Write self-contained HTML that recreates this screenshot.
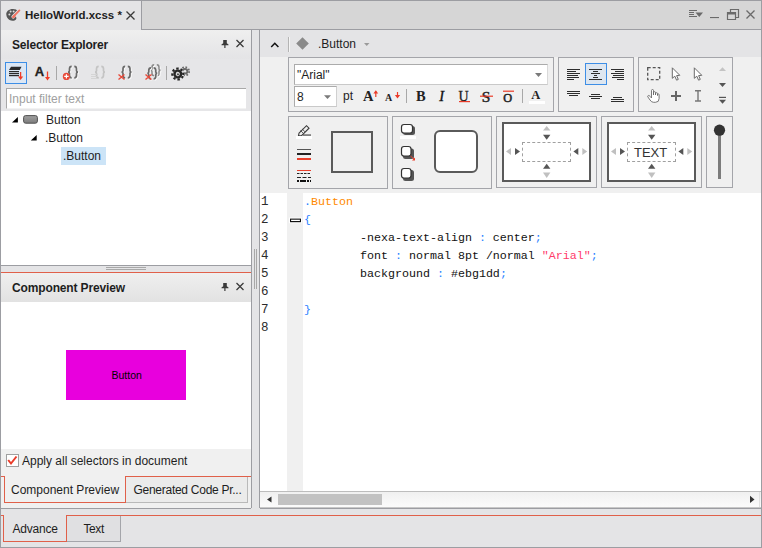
<!DOCTYPE html>
<html><head><meta charset="utf-8">
<style>
*{margin:0;padding:0;box-sizing:border-box}
html,body{width:762px;height:548px;overflow:hidden;background:#e4e4e6;font-family:"Liberation Sans",sans-serif;font-size:12px;color:#1e1e1e}
.a{position:absolute}
.t{position:absolute;white-space:nowrap;line-height:14px}
.b{font-weight:bold}
.m{font-family:"Liberation Mono",monospace}
svg{position:absolute;overflow:visible}
</style></head><body>
<!-- outer frame -->
<div class="a" style="left:0;top:0;width:762px;height:548px;border:1px solid #9c9da2;"></div>
<!-- tab bar -->
<div class="a" style="left:1px;top:1px;width:760px;height:28px;background:#d6d6d6"></div>
<div class="a" style="left:141px;top:29px;width:620px;height:1px;background:#9c9da2"></div>
<div class="a" style="left:1px;top:1px;width:140px;height:29px;background:#e4e4e6"></div>
<div class="a" style="left:141px;top:1px;width:1px;height:29px;background:#9c9da2"></div>
<div class="t b" id="doctab" style="left:25px;top:8px;font-size:11.5px">HelloWorld.xcss *</div>

<!-- left panel frame -->
<div class="a" style="left:1px;top:30px;width:250px;height:236px;background:#fff"></div>
<div class="a" style="left:251px;top:30px;width:1px;height:478px;background:#9c9da2"></div>
<!-- selector explorer header -->
<div class="a" style="left:1px;top:30px;width:250px;height:29px;background:linear-gradient(#efefef,#e4e4e6)"></div>
<div class="t b" id="selhdr" style="left:12px;top:38px;font-size:12px;letter-spacing:-0.2px">Selector Explorer</div>
<!-- toolbar -->
<div class="a" style="left:1px;top:59px;width:250px;height:52px;background:#e6e6e8"></div>
<div class="a" style="left:5px;top:62px;width:22px;height:22px;border:1px solid #3d8ee6;background:#dce7f4"></div>
<div class="a" style="left:6px;top:88px;width:240px;height:21px;border-top:1px solid #a8a8a8;border-left:1px solid #a8a8a8;border-bottom:1px solid #f2f2f2;background:#fff"></div>
<div class="t" id="filter" style="left:9px;top:92px;color:#a0a0a0">Input filter text</div>
<!-- tree -->
<div class="a" style="left:1px;top:265px;width:250px;height:1px;background:#9c9da2"></div>
<div class="a" style="left:61px;top:147px;width:45px;height:18px;background:#cce4f7"></div>
<div class="t" id="tr1" style="left:46px;top:113px">Button</div>
<div class="t" id="tr2" style="left:45px;top:131px">.Button</div>
<div class="t" id="tr3" style="left:63px;top:149px">.Button</div>

<!-- component preview -->
<div class="a" style="left:1px;top:272px;width:250px;height:1px;background:#e0604a"></div>
<div class="a" style="left:1px;top:273px;width:250px;height:29px;background:linear-gradient(#efefef,#e2e2e2)"></div>
<div class="t b" id="cphdr" style="left:12px;top:281px;font-size:12px;letter-spacing:-0.14px">Component Preview</div>
<div class="a" style="left:1px;top:302px;width:250px;height:147px;background:#fff"></div>
<div class="a" style="left:66px;top:350px;width:120px;height:50px;background:#e800dd"></div>
<div class="t" id="pbtn" style="left:111.5px;top:368px;font-size:10.5px;color:#000">Button</div>
<div class="a" style="left:1px;top:449px;width:250px;height:59px;background:#f0f0f0"></div>
<div class="a" style="left:6px;top:454px;width:13px;height:13px;border:1px solid #a0a0a0;background:#fff"></div>
<div class="t" id="apply" style="left:22px;top:454px">Apply all selectors in document</div>
<div class="a" style="left:1px;top:508px;width:250px;height:1px;background:#9c9da2"></div>

<!-- right editor -->
<div class="a" style="left:259px;top:30px;width:1px;height:478px;background:#9c9da2"></div>
<div class="a" style="left:260px;top:30px;width:501px;height:27px;background:#e4e4e6"></div>
<div class="t" id="edhdr" style="left:318px;top:37px">.Button</div>
<div class="a" style="left:260px;top:57px;width:501px;height:136px;background:#f0f0f0"></div>
<div class="a" style="left:260px;top:193px;width:501px;height:298px;background:#fff"></div>
<div class="a" style="left:287px;top:193px;width:16px;height:298px;background:#f0f0f0"></div>
<div class="a" style="left:260px;top:491px;width:501px;height:18px;border-top:1px solid #bdbdbd;border-bottom:1px solid #9c9da2;background:linear-gradient(#f0f0f0,#fcfcfc)"></div><div class="a" style="left:260px;top:507px;width:501px;height:1px;background:#c8c8c8"></div><div class="a" style="left:759px;top:492px;width:1px;height:15px;background:#e0e0e0"></div>
<div class="a" style="left:278px;top:494px;width:104px;height:11px;background:#c2c2c2"></div>


<!-- right toolbar groups -->
<div class="a" style="left:288px;top:57px;width:266px;height:55px;border:1px solid #a4a5aa;background:#f0f0f0"></div>
<div class="a" style="left:558px;top:57px;width:76px;height:55px;border:1px solid #a4a5aa;background:#f0f0f0"></div>
<div class="a" style="left:638px;top:57px;width:95px;height:55px;border:1px solid #a4a5aa;background:#f0f0f0"></div>
<div class="a" style="left:294px;top:64px;width:254px;height:21px;border:1px solid #ababab;border-right-color:#d9d9d9;border-bottom-color:#c9c9c9;background:#fff"></div>
<div class="t" id="arial" style="left:297px;top:68px">"Arial"</div>
<div class="a" style="left:294px;top:86px;width:43px;height:21px;border:1px solid #ababab;border-right-color:#d0d0d0;border-bottom-color:#c9c9c9;background:#fff"></div>
<div class="t" id="sz8" style="left:297px;top:90px">8</div>
<div class="t" id="pt" style="left:343px;top:89px">pt</div>
<div class="a" style="left:585px;top:63px;width:22px;height:22px;border:1px solid #3d8ee6;background:#dde6f0"></div>
<div class="a" style="left:288px;top:116px;width:100px;height:73px;border:1px solid #a4a5aa;background:#f0f0f0"></div>
<div class="a" style="left:392px;top:116px;width:100px;height:73px;border:1px solid #a4a5aa;background:#f0f0f0"></div>
<div class="a" style="left:496px;top:116px;width:101px;height:72px;border:1px solid #a4a5aa;background:#f0f0f0"></div>
<div class="a" style="left:601px;top:116px;width:101px;height:72px;border:1px solid #a4a5aa;background:#f0f0f0"></div>
<div class="a" style="left:706px;top:116px;width:27px;height:72px;border:1px solid #a4a5aa;background:#f0f0f0"></div>
<div class="a" style="left:502px;top:122px;width:89px;height:60px;border:2px solid #5a5a5a;background:#fff"></div>
<div class="a" style="left:607px;top:122px;width:89px;height:60px;border:2px solid #5a5a5a;background:#fff"></div>
<div class="a" style="left:522px;top:142px;width:49px;height:20px;border:1px dashed #a0a0a0"></div>
<div class="a" style="left:627px;top:142px;width:49px;height:20px;border:1px dashed #a0a0a0"></div>
<div class="t" id="textlbl" style="left:634px;top:146px;font-size:13px;color:#333">TEXT</div>
<div class="a" style="left:331px;top:131px;width:42px;height:42px;border:2.5px solid #5a5a5a;background:#f0f0f0"></div>
<div class="a" style="left:434px;top:130px;width:44px;height:43px;border:2.5px solid #5a5a5a;border-radius:6px;background:#fff"></div>


<!-- code editor -->
<style>
.ln{position:absolute;left:261px;font-family:"Liberation Mono",monospace;font-size:12.5px;line-height:18px;color:#2b2b2b;white-space:pre}
.cd{position:absolute;left:304px;font-family:"Liberation Mono",monospace;font-size:11.6667px;line-height:18px;color:#111;white-space:pre}
.bl{color:#2a7fff}.or{color:#ff8a00}.pk{color:#ff3a6a}
</style>
<div class="ln" id="lnums" style="top:193px">1<br>2<br>3<br>4<br>5<br>6<br>7<br>8</div>
<div class="cd" id="code" style="top:193px"><span class="bl">.</span><span class="or">Button</span>
<span class="bl">{</span>
        -nexa-text-align <span class="bl">:</span> center<span class="bl">;</span>
        font <span class="bl">:</span> normal 8pt /normal <span class="pk">"Arial"</span><span class="bl">;</span>
        background <span class="bl">:</span> #ebg1dd<span class="bl">;</span>

<span class="bl">}</span>
</div>
<!-- bottom-left tabs -->
<div class="a" style="left:1px;top:476px;width:4px;height:1px;background:#e0604a"></div>
<div class="a" style="left:125px;top:476px;width:126px;height:1px;background:#e0604a"></div>
<div class="a" style="left:4px;top:476px;width:122px;height:27px;border:1px solid #e0604a;border-top:none;background:#f0f0f0"></div>
<div class="a" style="left:126px;top:477px;width:122px;height:26px;border-right:1px solid #b9b9b9;border-bottom:1px solid #b9b9b9;background:#ebebeb"></div>
<div class="t" id="cptab" style="left:11px;top:483px">Component Preview</div>
<div class="t" id="gentab" style="left:133.5px;top:483px;letter-spacing:-0.27px">Generated Code Pr...</div>
<!-- bottom tabs -->
<div class="a" style="left:3px;top:515px;width:64px;height:27px;border:1px solid #e0604a;border-top:none;background:#e4e4e6"></div>
<div class="a" style="left:67px;top:516px;width:54px;height:26px;border-right:1px solid #a4a5aa;border-bottom:1px solid #a4a5aa;background:#e0e0e2"></div>

<div class="a" style="left:1px;top:515px;width:3px;height:1px;background:#e0604a"></div><div class="a" style="left:66px;top:515px;width:695px;height:1px;background:#e0604a"></div>
<div class="t" id="adv" style="left:12.5px;top:522px;letter-spacing:-0.2px">Advance</div>
<div class="t" id="txt" style="left:83.5px;top:522px;letter-spacing:-0.4px">Text</div>


<svg class="a" style="left:0;top:0" width="762" height="548" viewBox="0 0 762 548">
<defs>
<linearGradient id="btng" x1="0" y1="0" x2="0" y2="1"><stop offset="0" stop-color="#a0a0a0"/><stop offset="1" stop-color="#7c7c7c"/></linearGradient>
</defs>
<!-- doc tab palette icon -->
<path d="M6.3 14.8 C5.8 11.2 9.5 8.8 13.2 9 C16.4 9.2 18.2 10.6 17.6 12.4 C17.2 13.6 15.6 14 15.6 15.5 C15.6 17 17.2 17.8 16 19.4 C14.8 21 11.6 21.2 9.6 20 C7.6 18.8 6.6 17.2 6.3 14.8 Z" fill="#555"/>
<circle cx="10.6" cy="11.6" r="1" fill="#dcdcdc"/><circle cx="13.6" cy="11.4" r="1" fill="#dcdcdc"/><circle cx="9.4" cy="14.4" r="1" fill="#dcdcdc"/>
<path d="M19.4 10.4 L13.2 16.8" stroke="#e4e4e6" stroke-width="3.6" stroke-linecap="round"/>
<path d="M19.4 10.4 L14.6 15.4" stroke="#f07462" stroke-width="1.8" stroke-linecap="round"/>
<path d="M14.4 14.2 L16 15.8 L14.6 17.8 C13.8 18.6 12.4 18.4 12 17.6 C11.7 16.9 12.5 16.2 12.9 15.6 Z" fill="#f07462"/>
<!-- tab close -->
<path d="M126.5 11.5 L134.5 19.5 M134.5 11.5 L126.5 19.5" stroke="#3a3a3a" stroke-width="1.3"/>
<!-- tabbar right icons -->
<g fill="#6a6a6a">
<rect x="689" y="10" width="8" height="1"/><rect x="689" y="12" width="5" height="1"/><rect x="689" y="14" width="5" height="1"/><rect x="689" y="16" width="8" height="1"/>
<path d="M695.5 12.5 L703 12.5 L699.25 17 Z"/>
<rect x="710" y="17" width="9" height="1.1"/>
</g>
<path d="M730.5 12 V9.5 H738.5 V17.5 H735.5 M727.5 12.5 H735.5 V19.5 H727.5 Z" fill="none" stroke="#6a6a6a" stroke-width="1.2"/>
<rect x="727.5" y="12.5" width="8" height="2" fill="#6a6a6a"/>
<path d="M746.5 10.5 L754.5 18.5 M754.5 10.5 L746.5 18.5" stroke="#6a6a6a" stroke-width="1.3"/>
<!-- header pins & close -->
<g>
<path d="M223.2 40 H226.8 V43.2 L228.5 44.6 V45.2 H221.5 V44.6 L223.2 43.2 Z" fill="#3a3a3a"/>
<rect x="224.3" y="45" width="1.2" height="3" fill="#3a3a3a"/>
<path d="M236.5 40 L243.5 47 M243.5 40 L236.5 47" stroke="#3a3a3a" stroke-width="1.25"/>
</g>
<g transform="translate(0 243)">
<path d="M223.2 40 H226.8 V43.2 L228.5 44.6 V45.2 H221.5 V44.6 L223.2 43.2 Z" fill="#3a3a3a"/>
<rect x="224.3" y="45" width="1.2" height="3" fill="#3a3a3a"/>
<path d="M236.5 40 L243.5 47 M243.5 40 L236.5 47" stroke="#3a3a3a" stroke-width="1.25"/>
</g>
<!-- toolbar icon 1: stacked lines + arrow -->
<path d="M11 66.8 H21.5 L19.8 70 H9 Z" fill="#2a2a2a"/>
<rect x="9" y="71" width="10" height="1.2" fill="#2a2a2a"/><rect x="9" y="73" width="10" height="1.2" fill="#2a2a2a"/><rect x="9" y="75" width="10" height="1.2" fill="#2a2a2a"/>
<path d="M20.6 72 V78" stroke="#f03c28" stroke-width="1.3"/><path d="M18 76.5 H23.2 L20.6 80 Z" fill="#f03c28"/>
<!-- icon 2: A arrow -->
<text x="34.8" y="75.8" font-size="13" font-weight="bold" fill="#222" stroke="#222" stroke-width="0.3" font-family="Liberation Sans">A</text>
<path d="M47.5 71.5 V78.5" stroke="#f03c28" stroke-width="1.3"/><path d="M45 77 H50 L47.5 80.5 Z" fill="#f03c28"/>
<!-- separators -->
<rect x="56" y="66" width="1" height="14" fill="#a8a8a8"/><rect x="166" y="66" width="1" height="14" fill="#a8a8a8"/>
<!-- icon 3 {} + -->
<path d="M72.60 67.20 Q70.40 67.20 70.40 69.70 V71.75 Q70.40 72.95 68.90 72.95 Q70.40 72.95 70.40 74.15 V76.20 Q70.40 78.70 72.60 78.70 M75.20 67.20 Q77.40 67.20 77.40 69.70 V71.75 Q77.40 72.95 78.90 72.95 Q77.40 72.95 77.40 74.15 V76.20 Q77.40 78.70 75.20 78.70" fill="none" stroke="#fafafa" stroke-width="1.7"/><path d="M71.70 66.30 Q69.50 66.30 69.50 68.80 V70.85 Q69.50 72.05 68.00 72.05 Q69.50 72.05 69.50 73.25 V75.30 Q69.50 77.80 71.70 77.80 M74.30 66.30 Q76.50 66.30 76.50 68.80 V70.85 Q76.50 72.05 78.00 72.05 Q76.50 72.05 76.50 73.25 V75.30 Q76.50 77.80 74.30 77.80" fill="none" stroke="#6a6a6a" stroke-width="1.7"/>
<path d="M98.70 66.30 Q96.50 66.30 96.50 68.80 V70.85 Q96.50 72.05 95.00 72.05 Q96.50 72.05 96.50 73.25 V75.30 Q96.50 77.80 98.70 77.80 M101.30 66.30 Q103.50 66.30 103.50 68.80 V70.85 Q103.50 72.05 105.00 72.05 Q103.50 72.05 103.50 73.25 V75.30 Q103.50 77.80 101.30 77.80" fill="none" stroke="#c4c4c4" stroke-width="1.7"/>
<path d="M126.10 67.20 Q123.90 67.20 123.90 69.70 V71.75 Q123.90 72.95 122.40 72.95 Q123.90 72.95 123.90 74.15 V76.20 Q123.90 78.70 126.10 78.70 M128.70 67.20 Q130.90 67.20 130.90 69.70 V71.75 Q130.90 72.95 132.40 72.95 Q130.90 72.95 130.90 74.15 V76.20 Q130.90 78.70 128.70 78.70" fill="none" stroke="#fafafa" stroke-width="1.7"/><path d="M125.20 66.30 Q123.00 66.30 123.00 68.80 V70.85 Q123.00 72.05 121.50 72.05 Q123.00 72.05 123.00 73.25 V75.30 Q123.00 77.80 125.20 77.80 M127.80 66.30 Q130.00 66.30 130.00 68.80 V70.85 Q130.00 72.05 131.50 72.05 Q130.00 72.05 130.00 73.25 V75.30 Q130.00 77.80 127.80 77.80" fill="none" stroke="#6a6a6a" stroke-width="1.7"/>
<path d="M155.10 65.70 Q152.90 65.70 152.90 68.20 V70.00 Q152.90 71.20 151.40 71.20 Q152.90 71.20 152.90 72.40 V74.20 Q152.90 76.70 155.10 76.70 M157.70 65.70 Q159.90 65.70 159.90 68.20 V70.00 Q159.90 71.20 161.40 71.20 Q159.90 71.20 159.90 72.40 V74.20 Q159.90 76.70 157.70 76.70" fill="none" stroke="#fafafa" stroke-width="1.5"/><path d="M154.20 64.80 Q152.00 64.80 152.00 67.30 V69.10 Q152.00 70.30 150.50 70.30 Q152.00 70.30 152.00 71.50 V73.30 Q152.00 75.80 154.20 75.80 M156.80 64.80 Q159.00 64.80 159.00 67.30 V69.10 Q159.00 70.30 160.50 70.30 Q159.00 70.30 159.00 71.50 V73.30 Q159.00 75.80 156.80 75.80" fill="none" stroke="#8a8a8a" stroke-width="1.5"/>
<path d="M151.90 68.70 Q149.70 68.70 149.70 71.20 V73.00 Q149.70 74.20 148.20 74.20 Q149.70 74.20 149.70 75.40 V77.20 Q149.70 79.70 151.90 79.70 M154.50 68.70 Q156.70 68.70 156.70 71.20 V73.00 Q156.70 74.20 158.20 74.20 Q156.70 74.20 156.70 75.40 V77.20 Q156.70 79.70 154.50 79.70" fill="none" stroke="#fafafa" stroke-width="1.7"/><path d="M151.00 67.80 Q148.80 67.80 148.80 70.30 V72.10 Q148.80 73.30 147.30 73.30 Q148.80 73.30 148.80 74.50 V76.30 Q148.80 78.80 151.00 78.80 M153.60 67.80 Q155.80 67.80 155.80 70.30 V72.10 Q155.80 73.30 157.30 73.30 Q155.80 73.30 155.80 74.50 V76.30 Q155.80 78.80 153.60 78.80" fill="none" stroke="#6a6a6a" stroke-width="1.7"/>
<circle cx="66.4" cy="76.4" r="3.6" fill="#e84a3a"/><path d="M64.2 76.4 H68.6 M66.4 74.2 V78.6" stroke="#fff" stroke-width="1.2"/>
<!-- icon 4 disabled -->
<path d="M91 74.5 H98 M91 76.5 H98 M91 78.5 H98" stroke="#d2d2d2" stroke-width="0.9"/>
<!-- icon 5 -->
<path d="M118.5 74.5 L124.5 79.5 M124.5 74.5 L118.5 79.5" stroke="#e84a3a" stroke-width="1.4"/>
<!-- icon 6 -->
<path d="M145.5 74.5 L151.5 79.5 M151.5 74.5 L145.5 79.5" stroke="#e84a3a" stroke-width="1.4"/>
<!-- gear -->
<g transform="translate(185 71.3)">
<circle r="3.2" fill="#6a6a6a"/>
<circle r="4.1" fill="none" stroke="#6a6a6a" stroke-width="1.8" stroke-dasharray="1.6 1.62"/>
<circle r="1.3" fill="#e6e6e8"/>
</g>
<g transform="translate(177.8 74) rotate(22.5)">
<circle r="6.6" fill="#e6e6e8" opacity="0.9"/>
<circle r="4.5" fill="#262626"/>
<circle r="5.5" fill="none" stroke="#262626" stroke-width="2.2" stroke-dasharray="2.3 2.02"/>
<circle r="2.1" fill="#d8d8d8"/>
<circle r="1" cx="0.3" cy="0.2" fill="#444"/>
</g>
<!-- tree icons -->
<path d="M12 122.6 L17.9 117 V122.6 Z" fill="#000"/>
<path d="M30.8 140.6 L36.7 135 V140.6 Z" fill="#000"/>
<rect x="23.6" y="115.6" width="13.8" height="7.6" rx="2" fill="url(#btng)" stroke="#505050" stroke-width="1"/>
</svg>


<svg class="a" style="left:0;top:0" width="762" height="548" viewBox="0 0 762 548">
<!-- editor header -->
<path d="M271.2 47 L274.8 43.3 L278.4 47" fill="none" stroke="#111" stroke-width="1.5"/>
<rect x="288" y="37" width="1" height="15" fill="#b4b4b4"/><rect x="289" y="37" width="1" height="15" fill="#f4f4f4"/>
<path d="M302.5 37.2 L308.8 43.5 L302.5 49.8 L296.2 43.5 Z" fill="#8a8a8a"/>
<path d="M364 43 H369.5 L366.75 46 Z" fill="#9a9a9a"/>
<!-- combo arrows -->
<path d="M535 73 H542 L538.5 77 Z" fill="#7a7a7a"/>
<path d="M324 95.2 H331 L327.5 99 Z" fill="#7a7a7a"/>
<!-- A up/down -->
<text x="363" y="101" font-size="14.5" font-weight="bold" fill="#222" font-family="Liberation Serif">A</text>
<path d="M375.8 91.5 V97" stroke="#ea3c2a" stroke-width="1.2"/><path d="M373.4 93.5 L375.8 90.3 L378.2 93.5 Z" fill="#ea3c2a"/>
<text x="385" y="101" font-size="10" font-weight="bold" fill="#222" font-family="Liberation Serif">A</text>
<path d="M397.5 92 V97" stroke="#ea3c2a" stroke-width="1.2"/><path d="M394.9 95 L397.5 98.4 L400.1 95 Z" fill="#ea3c2a"/>
<rect x="406" y="89" width="1" height="14" fill="#a8a8a8"/><rect x="522" y="89" width="1" height="14" fill="#a8a8a8"/>
<text x="416" y="101.2" font-size="14.5" font-weight="bold" fill="#222" font-family="Liberation Serif">B</text>
<text x="439.3" y="101.2" font-size="14.5" font-style="italic" fill="#111" font-family="Liberation Serif" stroke="#111" stroke-width="0.35">I</text>
<text x="458.6" y="100.5" font-size="14" fill="#222" font-family="Liberation Serif" stroke="#222" stroke-width="0.3">U</text>
<rect x="459" y="101" width="11" height="1.2" fill="#ea3c2a"/>
<text x="481.8" y="101.6" font-size="15.5" fill="#222" font-family="Liberation Serif" stroke="#222" stroke-width="0.45">S</text>
<rect x="480" y="95.6" width="13" height="1.2" fill="#ea3c2a"/>
<text x="503.2" y="101.5" font-size="12.3" fill="#222" font-family="Liberation Serif" stroke="#222" stroke-width="0.5">O</text>
<rect x="503" y="90.6" width="11" height="1.2" fill="#ea3c2a"/>
<rect x="529" y="101" width="16" height="3" fill="#fff"/>
<text x="531.3" y="99.2" font-size="12.5" font-weight="bold" fill="#222" font-family="Liberation Serif">A</text>
<!-- align icons -->
<g fill="#2e2e2e">
<rect x="567" y="69" width="13" height="1"/><rect x="567" y="71" width="9" height="1"/><rect x="567" y="73" width="13" height="1"/><rect x="567" y="75" width="11" height="1"/><rect x="567" y="77" width="12" height="1"/><rect x="567" y="79" width="7" height="1"/>
<rect x="589" y="69" width="13" height="1"/><rect x="593" y="71" width="5" height="1"/><rect x="591" y="73" width="9" height="1"/><rect x="594" y="75" width="3" height="1"/><rect x="593" y="77" width="5" height="1"/><rect x="589" y="79" width="13" height="1"/>
<rect x="611" y="69" width="13" height="1"/><rect x="615" y="71" width="9" height="1"/><rect x="611" y="73" width="13" height="1"/><rect x="613" y="75" width="11" height="1"/><rect x="612" y="77" width="12" height="1"/><rect x="617" y="79" width="7" height="1"/>
<rect x="567" y="91" width="13" height="1"/><rect x="567" y="93" width="13" height="1"/><rect x="569" y="95" width="9" height="1"/>
<rect x="591" y="94" width="9" height="1"/><rect x="589" y="96" width="13" height="1"/><rect x="591" y="98" width="9" height="1"/>
<rect x="613" y="97" width="9" height="1"/><rect x="611" y="99" width="13" height="1"/><rect x="611" y="101" width="13" height="1"/>
</g>
<!-- group3 -->
<rect x="647.7" y="67.7" width="12" height="12" fill="none" stroke="#555" stroke-width="1.3" stroke-dasharray="3 2"/>
<path d="M672.3 67.8 V78.3 L674.8 76.2 L676.6 80.2 L678.3 79.4 L676.6 75.6 L679.8 75.3 Z" fill="#fff" stroke="#6a6a6a" stroke-width="1"/>
<path d="M694.3 67.8 V78.3 L696.8 76.2 L698.6 80.2 L700.3 79.4 L698.6 75.6 L701.8 75.3 Z" fill="#fff" stroke="#6a6a6a" stroke-width="1"/>
<path d="M719 71 L722.5 67.3 L726 71 Z" fill="#c4c4c4"/>
<path d="M719 83 H726 L722.5 87 Z" fill="#555"/>
<rect x="719" y="96.8" width="7" height="1.2" fill="#555"/><path d="M719 99.8 H726 L722.5 103.8 Z" fill="#555"/>
<path d="M651.5 97 V90.5 Q651.5 89.5 652.5 89.5 Q653.5 89.5 653.5 90.5 V95 V92.5 Q653.5 91.7 654.5 91.7 Q655.5 91.7 655.5 92.7 V95 V93.5 Q655.5 92.7 656.5 92.7 Q657.5 92.7 657.5 93.7 V95.5 V94.5 Q657.5 93.9 658.3 93.9 Q659.1 93.9 659.1 94.7 V98.5 Q659.1 102.3 655.5 102.3 H653.5 Q651.5 102.3 650 100 L647.8 96.8 Q647.4 95.8 648.3 95.5 Q649.2 95.3 650 96.3 L651.5 98 Z" fill="#fff" stroke="#6a6a6a" stroke-width="0.9"/>
<rect x="671" y="95" width="10" height="2" fill="#666"/><rect x="675" y="91" width="2" height="10" fill="#666"/>
<path d="M695 90.7 H701 M695 101 H701 M698 90.7 V101" stroke="#777" stroke-width="1.4"/>
<!-- row2 group1 -->
<path d="M299 133.2 L306.5 125.7 L309 128.2 L301.5 135.7 L298.5 135.8 Z" fill="none" stroke="#3a3a3a" stroke-width="1.1"/>
<path d="M300.5 130.5 L303.3 133.3 M302.2 129 L304.9 131.7" stroke="#3a3a3a" stroke-width="0.8"/>
<rect x="303" y="134.5" width="8" height="1.1" fill="#3a3a3a"/>
<rect x="296" y="136" width="16" height="3" fill="#fff"/>
<rect x="297" y="149" width="14" height="1" fill="#555"/>
<rect x="297" y="153" width="14" height="2" fill="#222"/>
<rect x="297" y="158" width="14" height="2" fill="#e8402c"/>
<rect x="297" y="170" width="14" height="1" fill="#e8402c"/>
<path d="M297 173.5 H311" stroke="#222" stroke-width="1" stroke-dasharray="2.5 1"/>
<path d="M297 177.5 H311" stroke="#222" stroke-width="1" stroke-dasharray="4 1.5"/>
<path d="M297 181 H311" stroke="#111" stroke-width="2" stroke-dasharray="2 1 6 1"/>
<!-- row2 group2 -->
<g>
<rect x="403" y="126" width="12" height="9" rx="2.5" fill="#555"/>
<rect x="401.5" y="124.5" width="11" height="8.5" rx="2.5" fill="#fff" stroke="#333" stroke-width="1.2"/>
<rect x="400" y="136" width="16" height="3" fill="#fff"/>
<rect x="403" y="148.5" width="11" height="10.5" rx="2.5" fill="#555"/>
<rect x="401.5" y="146.5" width="9.5" height="9.5" rx="2.5" fill="#fff" stroke="#333" stroke-width="1.2"/>
<path d="M410.5 156 L414.2 159.2" stroke="#ea3c2a" stroke-width="1"/><path d="M412 160.5 L415 160.5 L415 157.5 Z" fill="#ea3c2a"/>
<rect x="403" y="170" width="11" height="11" rx="2.5" fill="#555"/>
<rect x="401.5" y="168.5" width="9.5" height="9.5" rx="2.5" fill="#fff" stroke="#333" stroke-width="1.2"/>
</g>
<!-- padding arrows group3/4 -->
<g>
<path d="M543 130.6 L546.7 126 L550.4 130.6 Z" fill="#c0c0c0"/>
<path d="M543 134.7 H550.4 L546.7 139.7 Z" fill="#555"/>
<path d="M543 168.7 L546.7 163.8 L550.4 168.7 Z" fill="#555"/>
<path d="M543 172.5 H550.4 L546.7 178 Z" fill="#c0c0c0"/>
<path d="M511 147.9 V155 L506 151.5 Z" fill="#c0c0c0"/>
<path d="M515 147.9 V155 L520 151.5 Z" fill="#555"/>
<path d="M578.3 147.9 V155 L573.4 151.5 Z" fill="#555"/>
<path d="M582.3 147.9 V155 L587.2 151.5 Z" fill="#c0c0c0"/>
</g>
<g transform="translate(105 0)">
<path d="M543 130.6 L546.7 126 L550.4 130.6 Z" fill="#c0c0c0"/>
<path d="M543 134.7 H550.4 L546.7 139.7 Z" fill="#555"/>
<path d="M543 168.7 L546.7 163.8 L550.4 168.7 Z" fill="#555"/>
<path d="M543 172.5 H550.4 L546.7 178 Z" fill="#c0c0c0"/>
<path d="M511 147.9 V155 L506 151.5 Z" fill="#c0c0c0"/>
<path d="M515 147.9 V155 L520 151.5 Z" fill="#555"/>
<path d="M578.3 147.9 V155 L573.4 151.5 Z" fill="#555"/>
<path d="M582.3 147.9 V155 L587.2 151.5 Z" fill="#c0c0c0"/>
</g>
<!-- slider -->
<rect x="718" y="130" width="3" height="49" fill="#7c7c7c"/>
<circle cx="719.5" cy="130.2" r="5.6" fill="#333"/>
<!-- editor fold marker -->
<rect x="289" y="217.6" width="13" height="5.6" fill="#fff"/><rect x="290" y="218.6" width="11" height="3.6" fill="#111"/><rect x="291.1" y="219.7" width="8.8" height="1.3" fill="#fff"/>
<!-- scroll arrows -->
<path d="M271.5 496.5 V502.5 L267 499.5 Z" fill="#333"/>
<path d="M750 495.8 V503 L754.5 499.4 Z" fill="#333"/>
<!-- checkbox check -->
<path d="M8.2 460 L11 463.5 L16.5 456.5" fill="none" stroke="#ea3c2a" stroke-width="2"/>
<!-- splitter grips -->
<rect x="106" y="267" width="40" height="1" fill="#a8a8a8"/><rect x="106" y="269" width="40" height="1" fill="#a8a8a8"/>
<rect x="254" y="249" width="1" height="40" fill="#a8a8a8"/><rect x="256" y="249" width="1" height="40" fill="#a8a8a8"/>
</svg>

</body></html>
